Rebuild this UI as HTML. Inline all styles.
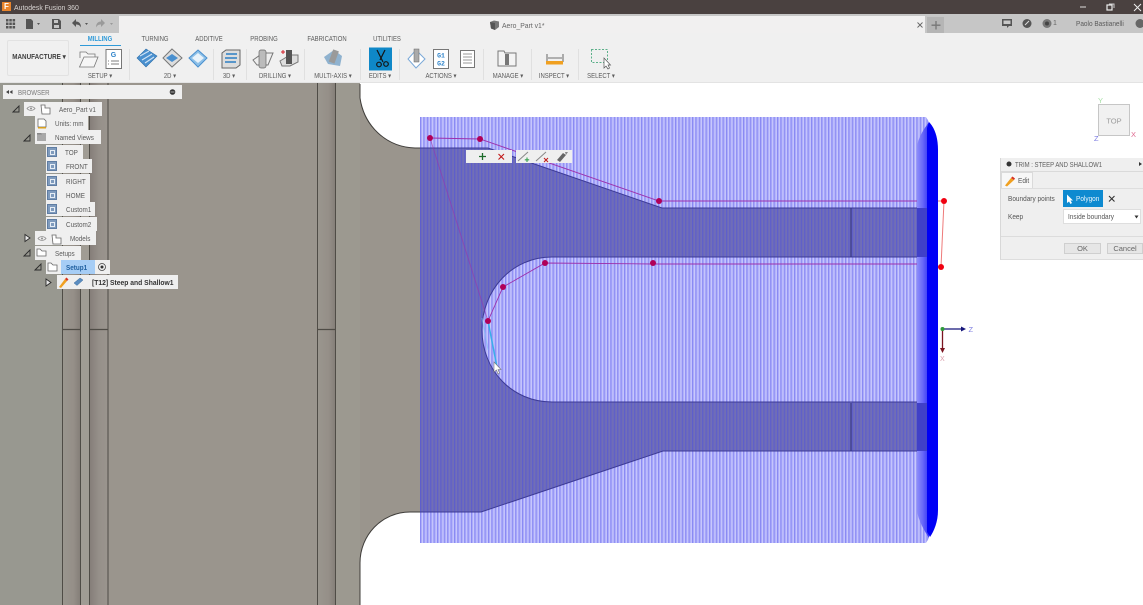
<!DOCTYPE html>
<html><head><meta charset="utf-8"><style>
html,body{margin:0;padding:0;width:1143px;height:605px;overflow:hidden;background:#fff}
body{position:relative;font-family:"Liberation Sans",sans-serif;color:#555;filter:blur(.3px)}
.a{position:absolute}
.t{position:absolute;font-size:7px;line-height:10px;white-space:nowrap;color:#5c5c5c;transform:translateX(-50%) scaleX(.85)}
.d{position:absolute;font-size:7.2px;line-height:10px;white-space:nowrap;color:#555;transform-origin:0 0;transform:scaleX(.9)}
.r{position:absolute;height:14px;background:#efefef;font-size:7.2px;line-height:14px;color:#5a5a5a;white-space:nowrap}
.r span{position:absolute;top:1px;white-space:nowrap;transform-origin:0 0;transform:scaleX(.88)}
.vi{position:absolute;left:1px;top:2px;width:10px;height:10px;background:#7f9bbd;border:1px solid #5f7da3;box-sizing:border-box}
.vi:after{content:"";position:absolute;left:2px;top:2px;width:3px;height:3px;border:1px solid #e6edf5}
.sep{position:absolute;top:49px;width:1px;height:31px;background:#e0e0e0}
svg{position:absolute;overflow:visible}
</style></head><body>

<!-- viewport background -->
<svg class="a" style="left:0;top:0" width="1143" height="605" viewBox="0 0 1143 605">
<defs>
<pattern id="lt" width="3.4" height="10" patternUnits="userSpaceOnUse" x="420"><rect width="3.4" height="10" fill="#acacfb"/><rect x="0" width="1" height="10" fill="#8a8af3"/><rect x="2.2" width=".8" height="10" fill="#d4d4fd"/></pattern>
<pattern id="dk" width="3.4" height="10" patternUnits="userSpaceOnUse" x="420"><rect width="3.4" height="10" fill="#6c6aba"/><rect x="0" width=".9" height="10" fill="#5c5cce"/><rect x="2.2" width=".8" height="10" fill="#7472b4"/></pattern>
<linearGradient id="g1" x1="0" x2="1" y1="0" y2="0"><stop offset="0" stop-color="#9a968e"/><stop offset=".6" stop-color="#958f88"/><stop offset="1" stop-color="#827c76"/></linearGradient>
<linearGradient id="g2" x1="0" x2="1" y1="0" y2="0"><stop offset="0" stop-color="#857e79"/><stop offset=".5" stop-color="#96908a"/><stop offset="1" stop-color="#9a958e"/></linearGradient>
<linearGradient id="bd" x1="917" x2="928" y1="0" y2="0" gradientUnits="userSpaceOnUse"><stop offset="0" stop-color="#8c8cfa"/><stop offset=".5" stop-color="#6a6af8"/><stop offset="1" stop-color="#3c3cf6"/></linearGradient>
</defs>
<rect x="0" y="80" width="360" height="525" fill="#9a958d"/>
<rect x="0" y="80" width="63" height="525" fill="#989890"/>
<rect x="63" y="80" width="18" height="525" fill="url(#g1)"/>
<rect x="81" y="80" width="9" height="525" fill="#a09c94"/>
<rect x="90" y="80" width="18" height="525" fill="url(#g2)"/>
<rect x="318" y="80" width="18" height="525" fill="url(#g1)"/>
<rect x="336" y="80" width="24" height="525" fill="#9c9990"/>
<g stroke="#4f4c46" stroke-width="1" fill="none">
<path d="M62.5 80V605M80.5 80V605M89.5 80V605M108 80V605M317.5 80V605M335.5 80V605"/>
<path d="M63 329.5H81M90 329.5H108M318 329.5H336" stroke-width="1.2"/>
</g>
<!-- fillets -->
<path d="M360 84V98C364 125 385 148 415 148H420V512H410C382 512 360 535 360 563V84Z" fill="#9a958d"/>
<path d="M360 98C364 125 385 147 415 148H420M420 512H410C382 512 360 535 360 563V605M360 84V98" fill="none" stroke="#3f3d3a" stroke-width="1"/>
<!-- toolpath -->
<path d="M420 117H926L929 122V538L926 543H420Z" fill="url(#lt)"/>
<path d="M420 148H488L662 208H931V257H552C512 257 482 290 482 330C482 370 512 402 552 402H931V451H663L481 512H420Z" fill="url(#dk)"/>
<path d="M420 148H488L662 208H931M931 257H552C512 257 482 290 482 330C482 370 512 402 552 402H931M931 451H663L481 512H420" fill="none" stroke="#3c3a96" stroke-width="1"/>
<path d="M851 208V257M851 403V451" stroke="#30307c" stroke-width="1"/>
<!-- boundary polygon under the bulge -->
<g fill="none" stroke="#9c30ac" stroke-width=".9">
<path d="M430 138L480 139L659 201H930M930 264H653L545 263L503 287L488 321"/>
<path d="M488 321L430 138" opacity=".6"/>
</g>
<!-- right bulge -->
<path d="M917 146C919 136 924 129 929 122V538C924 530 919 522 917 511Z" fill="url(#bd)"/>
<rect x="917" y="208" width="11" height="49" fill="#4040c8"/>
<rect x="917" y="403" width="11" height="48" fill="#4040c8"/>
<path d="M927 128L929 122C934 127 938 136 938 150V510C938 522 934 531 930 537L927 532Z" fill="#0000f6"/>
<path d="M944 201L941 267M938 201H944M938 267H941" stroke="#ee7a7a" stroke-width="1" fill="none"/>
<path d="M488 321L497 367" stroke="#3aaeea" stroke-width="1.5"/>
<path d="M482 318L488 350" stroke="#7ec0f0" stroke-width="1" opacity=".7"/>
<g fill="#b00058">
<circle cx="430" cy="138" r="3"/><circle cx="480" cy="139" r="3"/><circle cx="659" cy="201" r="3"/>
<circle cx="545" cy="263" r="3"/><circle cx="653" cy="263" r="3"/><circle cx="503" cy="287" r="3"/><circle cx="488" cy="321" r="3"/>
</g>
<circle cx="944" cy="201" r="3" fill="#f00010"/><circle cx="941" cy="267" r="3" fill="#f00010"/>
<path d="M494 362L494 372L496.500 370L498 374L499.500 373L498 369.500L501 369.500Z" fill="#fff" stroke="#777" stroke-width=".6"/>
<!-- triad -->
<path d="M942.500 329H964" stroke="#15157a" stroke-width="1.300"/><path d="M966 329L961 326.500V331.500Z" fill="#15157a"/>
<path d="M942.500 329V350" stroke="#7a1520" stroke-width="1.300"/><path d="M942.500 353L940 348H945Z" fill="#7a1520"/>
<circle cx="942.500" cy="329" r="2" fill="#2e9a3a"/>
<text x="968.500" y="332" font-family="Liberation Sans" font-size="7.500" fill="#8080e0">Z</text>
<text x="940" y="361" font-family="Liberation Sans" font-size="7" fill="#d89aa8">X</text>
<!-- view cube -->
<rect x="1098.500" y="104.500" width="31" height="31" fill="#f1f1f1" stroke="#c6c6c6"/>
<text x="1114" y="123.500" font-family="Liberation Sans" font-size="7.500" fill="#9a9a9a" text-anchor="middle">TOP</text>
<text x="1098" y="103" font-family="Liberation Sans" font-size="7.500" fill="#a8e0a8">Y</text>
<text x="1094" y="141" font-family="Liberation Sans" font-size="7.500" fill="#7a7ae0">Z</text>
<text x="1131" y="137" font-family="Liberation Sans" font-size="7.500" fill="#e06a90">X</text>
</svg>

<!-- title bar -->
<div class="a" style="left:0;top:0;width:1143px;height:14px;background:#4a4140"></div>
<div class="a" style="left:2px;top:2px;width:9px;height:9px;background:#e8842c;color:#fff;font-size:8px;line-height:9px;text-align:center;font-weight:bold">F</div>
<div class="d" style="left:14px;top:2.500px;font-size:7.500px;color:#d8d4d2;transform:scaleX(.92)">Autodesk Fusion 360</div>
<svg style="left:1080px;top:2px" width="63" height="10"><path d="M0 5H6" stroke="#ddd"/><rect x="27" y="3" width="5" height="5" fill="none" stroke="#eee" stroke-width="1.200"/><path d="M29 2H34V6" fill="none" stroke="#ccc"/><path d="M54 2L61 9M61 2L54 9" stroke="#eee"/></svg>

<!-- qat row -->
<div class="a" style="left:0;top:14px;width:1143px;height:19px;background:#c6c6c6"></div>
<div class="a" style="left:119px;top:16px;width:806px;height:17px;background:#f1f0f0"></div>
<div class="a" style="left:927px;top:17px;width:17px;height:16px;background:#b5b5b5"></div>
<svg style="left:0;top:14px" width="130" height="19">
<g fill="#555"><path d="M6 5h2.500v2.500H6zM9.300 5h2.500v2.500H9.300zM12.600 5h2.500v2.500h-2.500zM6 8.500h2.500V11H6zM9.300 8.500h2.500V11H9.300zM12.600 8.500h2.500V11h-2.500zM6 12h2.500v2.500H6zM9.300 12h2.500v2.500H9.300zM12.600 12h2.500v2.500h-2.500z"/>
<path d="M26 5h5l2 2v8h-7z"/><path d="M37 9h3l-1.500 2z"/>
<path d="M52 5h7l2 2v8h-9zM54 6v3h4V6zM54 11v3h5v-3z" fill-rule="evenodd"/>
<path d="M72 9l4-4v2.500c3 0 5 2 5 6-1-2-2.500-3-5-3V13z"/><path d="M85 9h3l-1.500 2z"/></g>
<g fill="#9a9a9a"><path d="M105 9l-4-4v2.500c-3 0-5 2-5 6 1-2 2.500-3 5-3V13z"/><path d="M110 9h3l-1.500 2z"/></g>
</svg>
<svg style="left:489px;top:20px" width="12" height="11"><path d="M1 2L5 0.500 10 1.500V7L6 10 2 8.500Z" fill="#777"/><path d="M1 2L6 3V10L2 8.500Z" fill="#555"/></svg>
<div class="d" style="left:502px;top:20.500px;color:#666;transform:scaleX(.95)">Aero_Part v1*</div>
<svg style="left:916px;top:20px" width="30" height="12"><path d="M1.500 2.500L6.500 7.500M6.500 2.500L1.500 7.500" stroke="#666" stroke-width=".9"/><path d="M20 1V9.500M15.500 5.200H24.500" stroke="#777" stroke-width="1.300"/></svg>
<svg style="left:1002px;top:17px" width="143" height="14">
<path d="M0 2H10V9H7L5 11V9H0Z" fill="#555"/><rect x="1.500" y="3.500" width="7" height="3.500" fill="#c8c8c8"/>
<circle cx="25" cy="6.500" r="4.500" fill="#555"/><path d="M23 8L27 4" stroke="#ddd"/>
<circle cx="45" cy="6.500" r="4.500" fill="#777"/><circle cx="45" cy="6.500" r="2" fill="#444"/>
<circle cx="138" cy="6.500" r="4.500" fill="#666"/>
</svg>
<div class="a" style="left:1053px;top:19px;font-size:7px;line-height:10px;color:#666">1</div>
<div class="d" style="left:1076px;top:19px;color:#5a5a5a">Paolo Bastianelli</div>

<!-- ribbon -->
<div class="a" style="left:0;top:33px;width:1143px;height:49px;background:#f0f0f0;border-bottom:1.500px solid #e3e3e3"></div>
<div class="t" style="left:100px;top:35px;color:#2f9ad8;font-weight:bold">MILLING</div>
<div class="a" style="left:80px;top:44.500px;width:41px;height:1.500px;background:#2f9ad8"></div>
<div class="t" style="left:155px;top:35px">TURNING</div>
<div class="t" style="left:209px;top:35px">ADDITIVE</div>
<div class="t" style="left:264px;top:35px">PROBING</div>
<div class="t" style="left:327px;top:35px">FABRICATION</div>
<div class="t" style="left:387px;top:35px">UTILITIES</div>
<div class="a" style="left:7px;top:40px;width:62px;height:36px;border:1px solid #e2e2e2;border-radius:2px;box-sizing:border-box"></div>
<div class="t" style="left:38.500px;top:53px;font-weight:bold;color:#3f3f3f;transform:translateX(-50%) scaleX(.9)">MANUFACTURE ▾</div>

<div class="sep" style="left:129px"></div><div class="sep" style="left:213px"></div><div class="sep" style="left:246px"></div><div class="sep" style="left:304px"></div><div class="sep" style="left:360px"></div><div class="sep" style="left:399px"></div><div class="sep" style="left:483px"></div><div class="sep" style="left:531px"></div><div class="sep" style="left:578px"></div>

<svg style="left:0;top:40px" width="640" height="34" viewBox="0 40 640 34">
<!-- folder -->
<path d="M80 58V52H86L88 54H95V57H84L79.500 67H94L98 57H95" fill="#f6f6f6" stroke="#777" stroke-width=".8"/>
<!-- G sheet -->
<rect x="106" y="49.500" width="15.500" height="19" fill="#fff" stroke="#777"/><text x="113.500" y="57" font-family="Liberation Sans" font-weight="bold" font-size="7" fill="#2c82c9" text-anchor="middle">G</text><path d="M111 61H119M111 64H119M108 61H109M108 64H109" stroke="#555" stroke-width=".8"/>
<!-- 2D -->
<path d="M146 49L157 56 146 67 137 58Z" fill="#4a90cf" stroke="#2c6ea8" stroke-width=".6"/><path d="M140 56L149 51M142 60L152 54M145 63L154 57" stroke="#cfe3f5" stroke-width="1.200"/>
<path d="M172 49L182 58 172 67 163 58Z" fill="#ddd" stroke="#777"/><path d="M172 54L178 58 172 62 166 58Z" fill="#4a90cf"/>
<path d="M198 50L207 58 198 67 189 58Z" fill="#8dc0e8" stroke="#4a90cf"/><path d="M198 53L204 58 198 63 192 58Z" fill="#e8f2fa"/>
<!-- 3D -->
<path d="M222 53L226 50H240V65L236 68H222Z" fill="#ddd" stroke="#666"/><path d="M226 54H237M225 58H237M225 62H236" stroke="#2c7fc4" stroke-width="1.500"/>
<!-- Drilling -->
<path d="M253 60L263 53H273L268 65H257Z" fill="#eee" stroke="#777"/><rect x="259" y="50" width="7" height="18" rx="2" fill="#bbb" stroke="#666" stroke-width=".7"/>
<path d="M280 61L290 55H298V62L290 66H282Z" fill="#ddd" stroke="#777"/><rect x="286" y="50" width="6" height="14" fill="#555"/><path d="M281 52H285M283 50V54" stroke="#d4202a"/>
<!-- Multi-axis -->
<path d="M324 57L334 50 342 56 340 66 328 64Z" fill="#8fb2cf"/><rect x="331" y="50" width="6" height="13" fill="#9a9a9a" transform="rotate(20 334 56)"/>
<!-- Edits -->
<rect x="369" y="47.500" width="23" height="23" fill="#0f88c8"/>
<path d="M377 50L383 62M385 50L380 60" stroke="#141414" stroke-width="1.200"/><circle cx="379" cy="64.500" r="2.300" fill="none" stroke="#141414" stroke-width="1.200"/><circle cx="386" cy="64" r="2.300" fill="none" stroke="#141414" stroke-width="1.200"/>
<!-- Actions -->
<path d="M416 50L425 59 416 68 408 59Z" fill="#fff" stroke="#7aa8d8"/><rect x="414" y="49" width="5" height="13" fill="#aaa" stroke="#666" stroke-width=".5"/>
<rect x="433.500" y="49.500" width="15" height="19" fill="#fff" stroke="#777"/>
<text x="441" y="57.500" font-family="Liberation Mono" font-weight="bold" font-size="6.500" fill="#2c82c9" text-anchor="middle">G1</text><text x="441" y="65.500" font-family="Liberation Mono" font-weight="bold" font-size="6.500" fill="#2c82c9" text-anchor="middle">G2</text>
<rect x="460.500" y="50.500" width="14" height="17" fill="#fff" stroke="#777"/><path d="M463 54H472M463 57H472M463 60H472M463 63H472" stroke="#777" stroke-width=".8"/>
<!-- Manage -->
<path d="M498 51H504L505 53H516V66H498Z" fill="#f4f4f4" stroke="#777"/><rect x="505" y="54" width="4" height="11" fill="#777"/>
<!-- Inspect -->
<path d="M547 54V62M563 54V62M548 58H562" stroke="#444" stroke-width=".8"/><rect x="546" y="61" width="17" height="3.500" fill="#f0a020"/>
<!-- Select -->
<rect x="591.500" y="49.500" width="16" height="13" fill="none" stroke="#5cb08a" stroke-dasharray="2 1.500"/>
<path d="M604 58V68L606 66L608 69L609.500 68L608 65H610.500Z" fill="#fff" stroke="#555" stroke-width=".7"/>
</svg>

<div class="t" style="left:99.500px;top:72px">SETUP ▾</div>
<div class="t" style="left:170px;top:72px">2D ▾</div>
<div class="t" style="left:229px;top:72px">3D ▾</div>
<div class="t" style="left:275px;top:72px">DRILLING ▾</div>
<div class="t" style="left:332.500px;top:72px">MULTI-AXIS ▾</div>
<div class="t" style="left:380px;top:72px">EDITS ▾</div>
<div class="t" style="left:440.500px;top:72px">ACTIONS ▾</div>
<div class="t" style="left:508px;top:72px">MANAGE ▾</div>
<div class="t" style="left:554px;top:72px">INSPECT ▾</div>
<div class="t" style="left:600.500px;top:72px">SELECT ▾</div>

<!-- browser -->
<div class="a" style="left:3px;top:85px;width:179px;height:14px;background:#efefef"></div>
<div class="d" style="left:18px;top:87.500px;color:#7a7a7a;transform:scaleX(.85)">BROWSER</div>
<svg style="left:5px;top:87px" width="178" height="10"><path d="M1 5L4 3V7ZM4.500 5L7.500 3V7Z" fill="#444"/><circle cx="167.500" cy="5" r="2.800" fill="#333"/><path d="M165.500 5H169.500" stroke="#ddd" stroke-width=".7"/></svg>

<div class="r" style="left:24px;top:102px;width:78px"><span style="left:35px">Aero_Part v1</span></div>
<div class="r" style="left:35px;top:116px;width:53px"><span style="left:20px">Units: mm</span></div>
<div class="r" style="left:35px;top:130px;width:66px"><span style="left:20px">Named Views</span></div>
<div class="r" style="left:46px;top:145px;width:37px"><i class="vi"></i><span style="left:19px">TOP</span></div>
<div class="r" style="left:46px;top:159px;width:46px"><i class="vi"></i><span style="left:20px">FRONT</span></div>
<div class="r" style="left:46px;top:174px;width:44px"><i class="vi"></i><span style="left:20px">RIGHT</span></div>
<div class="r" style="left:46px;top:188px;width:44px"><i class="vi"></i><span style="left:20px">HOME</span></div>
<div class="r" style="left:46px;top:202px;width:49px"><i class="vi"></i><span style="left:20px">Custom1</span></div>
<div class="r" style="left:46px;top:217px;width:51px"><i class="vi"></i><span style="left:20px">Custom2</span></div>
<div class="r" style="left:35px;top:231px;width:61px"><span style="left:35px">Models</span></div>
<div class="r" style="left:35px;top:246px;width:46px"><span style="left:20px">Setups</span></div>
<div class="r" style="left:46px;top:260px;width:64px"><span style="left:15px;top:0;width:34px;height:14px;background:#a6cdf5;transform:none"></span><span style="left:20px;font-weight:bold;color:#1f5f9f">Setup1</span></div>
<div class="r" style="left:57px;top:275px;width:121px"><span style="left:35px;font-weight:bold;color:#333;transform:scaleX(.94)">[T12] Steep and Shallow1</span></div>

<svg style="left:0;top:100px" width="180" height="190" viewBox="0 100 180 190">
<g fill="none" stroke="#2c2c2c" stroke-width=".9">
<path d="M13 112L19 106V112Z"/><path d="M24 141L30 135V141Z"/><path d="M24 256L30 250V256Z"/><path d="M35 270L41 264V270Z"/>
<path d="M25 234.500L30 238L25 241.500Z" fill="#e8e8e8"/><path d="M46 279L51 282.500L46 286Z" fill="#e8e8e8"/>
</g>
<g fill="none" stroke="#8c8c8c" stroke-width=".8">
<path d="M27 108.500C29 106 33 106 35 108.500C33 111 29 111 27 108.500Z"/><path d="M38 238.500C40 236 44 236 46 238.500C44 241 40 241 38 238.500Z"/>
</g>
<circle cx="31" cy="108.500" r="1" fill="#8c8c8c"/><circle cx="42" cy="238.500" r="1" fill="#8c8c8c"/>
<g fill="#fff" stroke="#666" stroke-width=".8">
<path d="M41 105H45V108H50V114H42Z"/><path d="M52 235H56V238H61V244H53Z"/>
<path d="M38 119H44L46 121V127H38Z"/>
<path d="M37 249H40L42 251H46V256H37Z"/><path d="M48 263H51L53 265H57V271H48Z"/>
</g>
<rect x="38" y="127" width="8" height="1.500" fill="#d8a020"/>
<path d="M37 133H46V141H37Z" fill="#a8a8a8"/><path d="M37 133H41L42 134.500H37Z" fill="#888"/>
<circle cx="102" cy="267" r="3.500" fill="none" stroke="#444" stroke-width=".8"/><circle cx="102" cy="267" r="1.500" fill="#333"/>
<path d="M59 287L65 279L67 281L61 288Z" fill="#f0a020"/><path d="M65 279L66.500 277.500L68.500 279.500L67 281Z" fill="#d83020"/>
<path d="M74 283L80 278L83 280L77 285.500Z" fill="#5b8dc0" stroke="#3f6f9f" stroke-width=".5"/>
</svg>

<!-- mini toolbars -->
<div class="a" style="left:466px;top:150px;width:46px;height:13px;background:#efefef"></div>
<div class="a" style="left:516px;top:150px;width:56px;height:13px;background:#efefef"></div>
<svg style="left:466px;top:150px" width="110" height="14">
<path d="M16.500 3V10M13 6.500H20" stroke="#1c6b2a" stroke-width="1.300"/>
<path d="M32.500 4L38 9.500M38 4L32.500 9.500" stroke="#c01818" stroke-width="1.100"/>
<path d="M52 11L62 2" stroke="#888"/><path d="M61 7.500V12M58.800 9.800H63.200" stroke="#38a050" stroke-width="1.100"/>
<path d="M70 11L80 2" stroke="#888"/><path d="M78 8L82 12M82 8L78 12" stroke="#c01818"/>
<path d="M91 10L97 3L100 5L94 12Z" fill="#666"/><path d="M99 2H102L100 5Z" fill="#888"/>
</svg>

<!-- trim dialog -->
<div class="a" style="left:1000px;top:158px;width:143px;height:102px;background:#efefef;border-left:1px solid #d8d8d8;box-sizing:border-box;border-bottom:1px solid #ddd"></div>
<div class="a" style="left:1001px;top:171px;width:142px;height:1px;background:#dadada"></div>
<div class="d" style="left:1015px;top:159.500px;color:#5f5f5f;transform:scaleX(.83)">TRIM : STEEP AND SHALLOW1</div>
<svg style="left:1003px;top:158px" width="140" height="30"><circle cx="6" cy="6" r="2.500" fill="#333"/><path d="M136 4L139 6L136 8Z" fill="#333"/></svg>
<div class="a" style="left:1001px;top:172px;width:32px;height:16px;background:#f7f7f7;border:1px solid #dadada;border-bottom:none;box-sizing:border-box"></div>
<svg style="left:1004px;top:175px" width="12" height="12"><path d="M1 10.500L7 3L10 5L3 11.500Z" fill="#f0a020"/><path d="M7 3L8.500 1.500L11 3.500L10 5Z" fill="#d83020"/></svg>
<div class="d" style="left:1018px;top:176px">Edit</div>
<div class="a" style="left:1001px;top:188px;width:142px;height:1px;background:#dedede"></div>
<div class="d" style="left:1008px;top:193.500px">Boundary points</div>
<div class="a" style="left:1063px;top:190px;width:40px;height:17px;background:#0e8ad0"></div>
<svg style="left:1066px;top:194px" width="10" height="10"><path d="M1 0.500V9L3 7.500L4.500 10L6 9L4.500 6.500H7Z" fill="#fff"/></svg>
<div class="d" style="left:1076px;top:194px;color:#eaf5fc">Polygon</div>
<svg style="left:1108px;top:194.500px" width="8" height="8"><path d="M1 1L6.500 6.500M6.500 1L1 6.500" stroke="#333" stroke-width="1.100"/></svg>
<div class="d" style="left:1008px;top:212px">Keep</div>
<div class="a" style="left:1063px;top:209px;width:78px;height:15px;background:#fff;border:1px solid #dedede;box-sizing:border-box"></div>
<div class="d" style="left:1068px;top:212px">Inside boundary</div>
<svg style="left:1134px;top:215px" width="6" height="4"><path d="M0.500 0.500H4.500L2.500 3.500Z" fill="#333"/></svg>
<div class="a" style="left:1001px;top:236px;width:142px;height:1px;background:#dcdcdc"></div>
<div class="a" style="left:1064px;top:243px;width:37px;height:11px;background:#e6e6e6;border:1px solid #cfcfcf;box-sizing:border-box;font-size:7.500px;line-height:10px;text-align:center;color:#666">OK</div>
<div class="a" style="left:1107px;top:243px;width:36px;height:11px;background:#e6e6e6;border:1px solid #cfcfcf;box-sizing:border-box;font-size:7.500px;line-height:10px;text-align:center;color:#666">Cancel</div>
</body></html>
